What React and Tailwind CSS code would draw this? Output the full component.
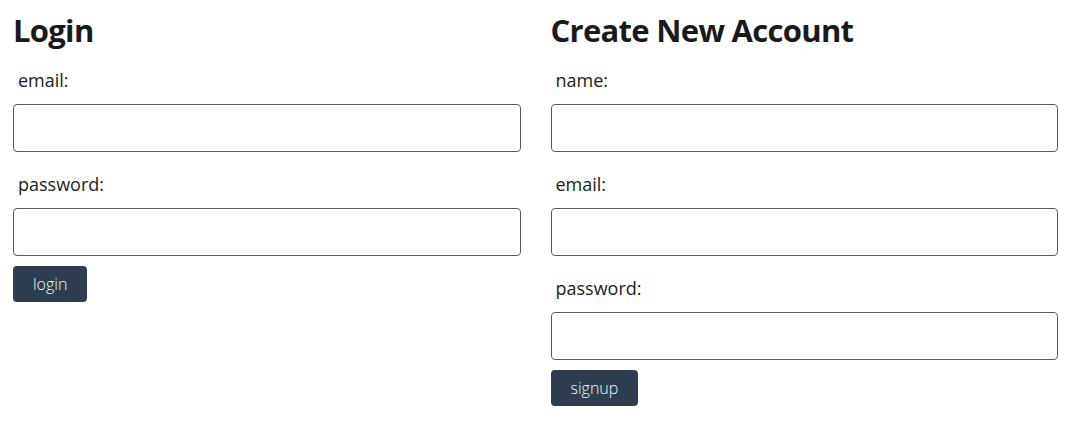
import React from 'react'

// ── Small field: label + input ───────────────────────────────────────────────
function Field({ label, type = 'text' }) {
  return (
    <div className="flex flex-col">
      <label className="pl-[5px] pt-[20px] pb-[12px] text-[18px] leading-[24px] text-[#1c1c1c]">
        {label}
      </label>
      <input
        type={type}
        className="h-[48px] w-full rounded-[4px] border border-[#5a5a5a] bg-white px-2 outline-none"
      />
    </div>
  )
}

function Button({ children }) {
  return (
    <button className="mt-[10px] h-[36px] self-start rounded-[4px] bg-[#2c3e50] px-[20px] text-[16px] font-light text-[#f4f6f8]">
      {children}
    </button>
  )
}

export default function App() {
  return (
    <div
      className="min-h-[436px] w-full bg-white pl-[13px] pr-[22px] pt-[12px]"
      style={{ fontFamily: '"Open Sans", "Noto Sans", sans-serif' }}
    >
      <div className="grid grid-cols-2 gap-[30px]">
        {/* Login */}
        <div className="flex flex-col">
          <h1 className="text-[31px] font-bold leading-[36px] tracking-[-0.7px] text-[#1a1a1a]">Login</h1>
          <Field label="email:" />
          <Field label="password:" type="password" />
          <Button>login</Button>
        </div>

        {/* Signup */}
        <div className="flex flex-col">
          <h1 className="text-[31px] font-bold leading-[36px] tracking-[-0.7px] text-[#1a1a1a]">Create New Account</h1>
          <Field label="name:" />
          <Field label="email:" />
          <Field label="password:" type="password" />
          <Button>signup</Button>
        </div>
      </div>
    </div>
  )
}
